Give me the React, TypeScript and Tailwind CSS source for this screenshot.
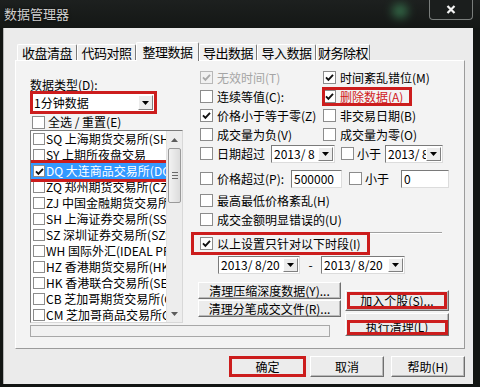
import React from 'react';

const exchanges = [
  'SQ 上海期货交易所(SHFE)',
  'SY 上期所夜盘交易',
  'DQ 大连商品交易所(DCE)',
  'ZQ 郑州期货交易所(CZCE)',
  'ZJ 中国金融期货交易所(CFFEX)',
  'SH 上海证券交易所(SSE)',
  'SZ 深圳证券交易所(SZSE)',
  'WH 国际外汇(IDEAL PRO)',
  'HZ 香港期货交易所(HKFE)',
  'HK 香港联合交易所(SEHK)',
  'CB 芝加哥期货交易所(CBOT)',
  'CM 芝加哥商品交易所CME',
];

const tabs = [
  { label: '收盘清盘', w: 'w-[60px]' },
  { label: '代码对照', w: 'w-[59px]' },
  { label: '整理数据', w: 'w-[63px]', active: true },
  { label: '导出数据', w: 'w-[58px]' },
  { label: '导入数据', w: 'w-[59px]' },
  { label: '财务除权', w: 'w-[54px]' },
];

const Tick = ({ color }: { color: string }) => (
  <svg width="9" height="9" viewBox="0 0 9 9" className="block">
    <path d="M1 4.4 L3.4 6.8 L8 1.8" fill="none" stroke={color} strokeWidth="1.9" />
  </svg>
);

const Box = ({ checked, disabled, small }: { checked?: boolean; disabled?: boolean; small?: boolean }) => (
  <span
    className={`shrink-0 flex items-center justify-center border ${small ? 'w-[12px] h-[12px]' : 'w-[13px] h-[13px]'} ${
      disabled ? 'border-[#b8b8b8] bg-[#f1f1f1]' : 'border-[#8c8c8c] bg-white'
    }`}
  >
    {checked && <Tick color={disabled ? '#a9a9a9' : '#111'} />}
  </span>
);

const Opt = ({
  label,
  checked,
  disabled,
  red,
  className = '',
}: {
  label: string;
  checked?: boolean;
  disabled?: boolean;
  red?: boolean;
  className?: string;
}) => (
  <div className={`flex items-center h-[19px] ${className}`}>
    <span className="ml-[1px] flex">
      <Box checked={checked} disabled={disabled} />
    </span>
    <span className={`ml-[4px] whitespace-nowrap ${disabled ? 'text-[#a5a5a5]' : red ? 'text-[#d0191c]' : 'text-black'}`}>
      {label}
    </span>
  </div>
);

const Arrow = () => (
  <svg width="7" height="4" viewBox="0 0 7 4" className="block">
    <path d="M0 0H7L3.5 4Z" fill="#000" />
  </svg>
);

const Combo = ({ value, className }: { value: string; className: string }) => (
  <div className={`flex h-[18px] bg-white border border-[#7a7a7a] border-r-[#dcdcdc] border-b-[#dcdcdc] ${className}`}>
    <span className="flex-1 pl-[2px] leading-[16px] whitespace-pre overflow-hidden">{value}</span>
    <span className="w-[15px] shrink-0 my-[1px] mr-[1px] flex items-center justify-center bg-[#ececec] border border-t-white border-l-white border-r-[#808080] border-b-[#808080]">
      <Arrow />
    </span>
  </div>
);

const Field = ({ value, className }: { value: string; className: string }) => (
  <div className={`h-[18px] bg-white border border-[#7a7a7a] border-r-[#dcdcdc] border-b-[#dcdcdc] pl-[2px] leading-[16px] ${className}`}>
    {value}
  </div>
);

const Btn = ({ children, className = '' }: { children: React.ReactNode; className?: string }) => (
  <div
    className={`flex items-center justify-center whitespace-nowrap bg-[#ececec] border border-t-white border-l-white border-r-[#6f6f6f] border-b-[#6f6f6f] shadow-[inset_-1px_-1px_0_#b9b9b9] ${className}`}
  >
    {children}
  </div>
);

export default function App() {
  return (
    <div className="w-[480px] h-[387px] overflow-hidden flex flex-col relative bg-[#121513] text-[12px] leading-[14px] text-black font-['Noto_Sans_CJK_SC','Noto_Sans',sans-serif]">
      {/* title bar */}
      <div className="h-[28px] shrink-0 flex items-start relative bg-[linear-gradient(180deg,#1d201f,#141715)]">
        <span className="absolute left-[392px] top-[4px] w-[16px] h-[14px] rounded-full bg-[#3f8a5a] blur-[5px] opacity-70" />
        <span className="ml-[4px] mt-[6px] text-[13px] leading-[16px] text-[#cfcfcf] [text-shadow:0_0_3px_#000]">数据管理器</span>
        <div className="relative ml-auto mr-[7px] w-[44px] h-[20px] border border-t-0 border-[#7a7e7c] rounded-b-[4px] flex items-center justify-center bg-[#1b1e1d]">
          <svg width="10" height="9" viewBox="0 0 10 9" className="block">
            <path d="M1.5 1L8.5 8M8.5 1L1.5 8" stroke="#f4f4f4" strokeWidth="2.2" />
          </svg>
        </div>
      </div>

      {/* client area */}
      <div className="ml-[3px] w-[470px] h-[356px] bg-[#ebebeb] border-l border-[#b4b4b4] flex flex-col">
        {/* tabs */}
        <div className="mt-[14px] ml-[13px] h-[18px] flex items-end relative z-10">
          {tabs.map((t) =>
            t.active ? (
              <div
                key={t.label}
                className={`${t.w} h-[19px] -mb-[1px] shrink-0 flex items-center justify-center whitespace-nowrap bg-[#f3f3f3] border-t border-l border-white border-r border-r-[#7a7a7a] rounded-t-[2px] text-[13px] tracking-[-0.5px]`}
              >
                {t.label}
              </div>
            ) : (
              <div
                key={t.label}
                className={`${t.w} h-[16px] shrink-0 flex items-center justify-center whitespace-nowrap bg-[#efefef] border-t border-l border-white border-r border-r-[#7a7a7a] rounded-t-[2px] text-[13px] tracking-[-0.5px]`}
              >
                {t.label}
              </div>
            )
          )}
        </div>

        {/* tab panel */}
        <div className="ml-[11px] w-[450px] h-[289px] shrink-0 bg-[#f3f3f3] border border-t-white border-l-white border-r-[#9b9b9b] border-b-[#9b9b9b] flex items-start">
          {/* left column */}
          <div className="ml-[14px] w-[153px] shrink-0 flex flex-col">
            <div className="mt-[17px] h-[14px]">数据类型(D):</div>
            <div className="mt-[2px] ml-[3px] w-[121px] h-[17px] flex bg-white outline-solid outline-3 outline-[#cc1d1d]">
              <span className="flex-1 pl-[1px] leading-[17px]">1分钟数据</span>
              <span className="w-[15px] my-[1px] mr-[1px] flex items-center justify-center bg-[#ececec] border border-t-white border-l-white border-r-[#808080] border-b-[#808080]">
                <Arrow />
              </span>
            </div>
            <div className="mt-[4px] h-[14px] flex items-center">
              <span className="ml-[2px] flex">
                <Box />
              </span>
              <span className="ml-[3px] whitespace-pre">全选 / 重置(E)</span>
            </div>
            <div className="mt-[1px] h-[193px] flex bg-white border border-[#7c7c7c] border-r-[#d8d8d8] border-b-[#d8d8d8]">
              <div className="flex-1 min-w-0 flex flex-col overflow-hidden">
                {exchanges.map((ex) => {
                  const sel = ex.startsWith('DQ');
                  return (
                    <div
                      key={ex}
                      className={`h-[16px] shrink-0 flex items-center whitespace-nowrap ${
                        sel ? 'bg-[#3399ff] text-white outline-solid outline-3 outline-[#cc1d1d] relative z-10' : ''
                      }`}
                    >
                      <span className="ml-[2px] flex">
                        <Box small checked={sel} />
                      </span>
                      <span className="ml-[1px]">{ex}</span>
                    </div>
                  );
                })}
              </div>
              <div className="w-[16px] shrink-0 flex flex-col bg-[#ededed] border-l border-[#e2e2e2]">
                <div className="h-[17px] flex items-center justify-center">
                  <svg width="7" height="4" viewBox="0 0 7 4" className="block">
                    <path d="M3.5 0L7 4H0Z" fill="#5c5c5c" />
                  </svg>
                </div>
                <div className="h-[55px] mx-[1px] rounded-[2px] border border-[#9a9a9a] bg-[linear-gradient(90deg,#f2f2f2,#dcdcdc)] flex flex-col items-center justify-center gap-[2px]">
                  <span className="w-[6px] h-[1px] bg-[#6a6a6a]" />
                  <span className="w-[6px] h-[1px] bg-[#6a6a6a]" />
                  <span className="w-[6px] h-[1px] bg-[#6a6a6a]" />
                </div>
                <div className="flex-1" />
                <div className="h-[17px] flex items-center justify-center">
                  <svg width="7" height="4" viewBox="0 0 7 4" className="block">
                    <path d="M0 0H7L3.5 4Z" fill="#5c5c5c" />
                  </svg>
                </div>
              </div>
            </div>
            <div className="mt-[2px] w-[300px] h-[12px] shrink-0 border border-[#a8a8a8] bg-[#f1f1f1]" />
          </div>

          {/* right area */}
          <div className="ml-[16px] w-[252px] shrink-0 flex flex-col">
            <div className="mt-[7px] flex">
              <Opt className="w-[123px]" label="无效时间(T)" checked disabled />
              <Opt label="时间紊乱错位(M)" checked />
            </div>
            <div className="flex">
              <Opt className="w-[123px]" label="连续等值(C):" />
              <div className="w-[90px] outline-solid outline-3 outline-[#cc1d1d] -outline-offset-3">
                <Opt label="删除数据(A)" checked red />
              </div>
            </div>
            <div className="flex">
              <Opt className="w-[123px]" label="价格小于等于零(Z)" checked />
              <Opt label="非交易日期(B)" />
            </div>
            <div className="flex">
              <Opt className="w-[123px]" label="成交量为负(V)" />
              <Opt label="成交量为零(O)" />
            </div>
            <div className="flex items-center h-[19px]">
              <span className="ml-[1px] flex">
                <Box />
              </span>
              <span className="ml-[4px] w-[50px]">日期超过</span>
              <Combo className="ml-[4px] w-[64px]" value="2013/ 8" />
              <span className="ml-[6px] flex">
                <Box />
              </span>
              <span className="ml-[3px] w-[24px]">小于</span>
              <Combo className="ml-[4px] w-[58px]" value="2013/ 8" />
            </div>
            <div className="mt-[6px] flex items-center h-[19px]">
              <span className="ml-[1px] flex">
                <Box />
              </span>
              <span className="ml-[4px] w-[70px] whitespace-nowrap">价格超过(P):</span>
              <Field className="ml-[4px] w-[51px]" value="500000" />
              <span className="ml-[7px] flex">
                <Box />
              </span>
              <span className="ml-[3px] w-[24px]">小于</span>
              <Field className="ml-[12px] w-[48px]" value="0" />
            </div>
            <Opt className="mt-[3px]" label="最高最低价格紊乱(H)" />
            <Opt label="成交金额明显错误的(U)" />
            <div className="mt-[3px] w-[243px] h-[2px] border-t border-[#a0a0a0] border-b border-b-white" />
            <div className="mt-[1px] -ml-[5px] pl-[5px] w-[173px] h-[17px] flex items-center outline-solid outline-3 outline-[#cc1d1d]">
              <Opt label="以上设置只针对以下时段(I)" checked />
            </div>
            <div className="mt-[4px] flex items-center">
              <Combo className="ml-[19px] w-[82px]" value="2013/ 8/20" />
              <span className="w-[21px] text-center">-</span>
              <Combo className="w-[84px]" value="2013/ 8/20" />
            </div>
            <div className="mt-[8px] flex items-start">
              <div className="-ml-[1px] w-[143px] flex flex-col">
                <Btn className="h-[17px]">清理压缩深度数据(Y)...</Btn>
                <Btn className="mt-[1px] h-[17px]">清理分笔成交文件(R)...</Btn>
              </div>
              <div className="ml-[4px] w-[104px] flex flex-col">
                <Btn className="mt-[8px] h-[21px] outline-solid outline-3 outline-[#cc1d1d] -outline-offset-5">加入个股(S)...</Btn>
                <Btn className="mt-[2px] h-[23px] relative">
                  <span className="mt-[4px]">执行清理(L)</span>
                  <span className="absolute left-[1px] right-[0px] top-[6px] bottom-0 border-3 border-[#cc1d1d]" />
                </Btn>
              </div>
            </div>
          </div>
        </div>

        {/* dialog buttons */}
        <div className="mt-[7px] flex justify-end pr-[8px]">
          <Btn className="w-[77px] h-[21px] border-r-[#222] border-b-[#222] outline-solid outline-3 outline-[#cc1d1d] -outline-offset-3">
            确定
          </Btn>
          <Btn className="ml-[4px] w-[74px] h-[21px]">取消</Btn>
          <Btn className="ml-[7px] w-[74px] h-[21px]">帮助(H)</Btn>
        </div>
      </div>
    </div>
  );
}
